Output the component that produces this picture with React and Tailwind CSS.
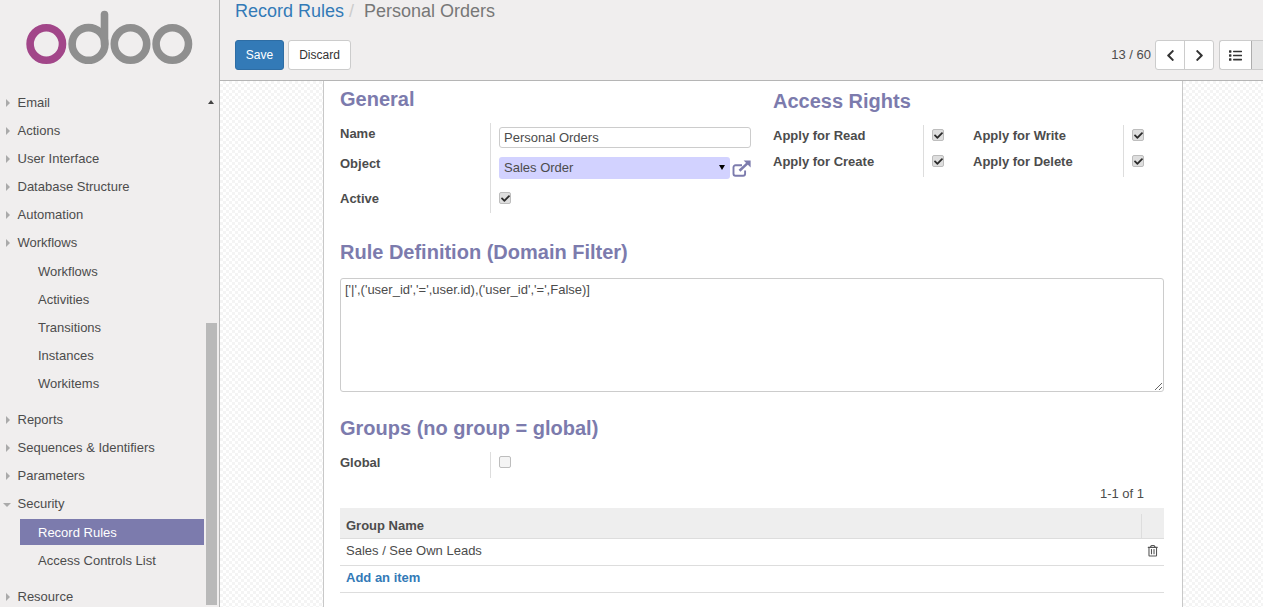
import React from "react";
import { FaCheck, FaChevronLeft, FaChevronRight, FaList, FaRegTrashAlt } from "react-icons/fa";

const Logo = () => (
  <svg width="170" height="56" viewBox="0 0 170 56" className="block">
    <circle cx="20.3" cy="36" r="16.2" fill="none" stroke="#a24689" strokeWidth="7.6" />
    <circle cx="62.5" cy="36" r="16.4" fill="none" stroke="#8f8f8f" strokeWidth="7.6" />
    <line x1="78.5" y1="36" x2="78.5" y2="6.5" stroke="#8f8f8f" strokeWidth="7.6" strokeLinecap="round" />
    <circle cx="104.5" cy="36" r="16.2" fill="none" stroke="#8f8f8f" strokeWidth="7.6" />
    <circle cx="146.3" cy="36" r="16.2" fill="none" stroke="#8f8f8f" strokeWidth="7.6" />
  </svg>
);

const ExternalLink = () => (
  <svg width="19" height="17" viewBox="0 0 19 17" className="ml-[1.5px] mt-[3px] shrink-0">
    <path d="M10 5.3H3.5a2 2 0 0 0-2 2v6.4a2 2 0 0 0 2 2h7.6a2 2 0 0 0 2-2v-3.2" fill="none" stroke="#7c7bad" strokeWidth="1.9" />
    <path d="M7.5 10.8 15.4 3.4" fill="none" stroke="#7c7bad" strokeWidth="2.6" />
    <path d="M11.6 0.4H18.6V7.6Z" fill="#7c7bad" />
  </svg>
);

const Top = ({ label, open }) => (
  <div className="relative flex h-7 items-center pl-[17.5px]">
    {open ? (
      <span className="absolute left-[2.5px] top-[13px] h-0 w-0 border-x-[4px] border-t-[4px] border-x-transparent border-t-[#aaaaaa]" />
    ) : (
      <span className="absolute left-[6px] top-[10px] h-0 w-0 border-y-[4.5px] border-l-[4.5px] border-y-transparent border-l-[#aaaaaa]" />
    )}
    {label}
  </div>
);
const Sub = ({ label, active }) => (
  <div className={`mb-0.5 ml-5 flex h-[26px] w-[184px] items-center pl-[18px] pt-[2px] ${active ? "bg-[#7c7bad] text-white" : ""}`}>{label}</div>
);

const Check = ({ on, className = "" }) => (
  <span className={`flex h-[12px] w-[12px] shrink-0 items-center justify-center rounded-[2px] border border-[#bdbdbd] ${on ? "bg-[#dedede]" : "bg-[#f4f4f4]"} ${className}`}>
    {on && <FaCheck className="text-[9px] text-[#2b2b2b]" />}
  </span>
);

const Heading = ({ children, className = "" }) => (
  <h2 className={`text-[20px] leading-[22px] font-bold text-[#7c7bad] ${className}`}>{children}</h2>
);

const RightPair = ({ a, b }) => (
  <div className="flex w-[200px] shrink-0">
    <div className="w-[150px] font-bold">
      <div className="flex h-[26px] items-center pb-[5px]">{a}</div>
      <div className="flex h-[26px] items-center pb-[5px]">{b}</div>
    </div>
    <div className="border-l border-[#ddd] pl-[8px]">
      <div className="flex h-[26px] items-center pb-[6px]"><Check on /></div>
      <div className="flex h-[26px] items-center pb-[6px]"><Check on /></div>
    </div>
  </div>
);

export default function App() {
  return (
    <div className="flex h-[607px] w-[1263px] overflow-hidden bg-[#f0eeee] text-[13px] text-[#4c4c4c] font-['Liberation_Sans',Arial,sans-serif]">
      <aside className="relative w-[220px] shrink-0 overflow-hidden border-r border-[#b5b5b5]">
        <div className="flex h-[89px] items-start pt-[8px] pl-[26px]"><Logo /></div>
        <Top label="Email" />
        <Top label="Actions" />
        <Top label="User Interface" />
        <Top label="Database Structure" />
        <Top label="Automation" />
        <Top label="Workflows" />
        <div className="mt-[1px] mb-[10px]">
          <Sub label="Workflows" />
          <Sub label="Activities" />
          <Sub label="Transitions" />
          <Sub label="Instances" />
          <Sub label="Workitems" />
        </div>
        <Top label="Reports" />
        <Top label="Sequences & Identifiers" />
        <Top label="Parameters" />
        <Top label="Security" open />
        <div className="mt-[1px] mb-[10px]">
          <Sub label="Record Rules" active />
          <Sub label="Access Controls List" />
        </div>
        <Top label="Resource" />
        <span className="absolute left-[208px] top-[100px] h-0 w-0 border-x-[3.5px] border-b-[4px] border-x-transparent border-b-[#444]" />
        <div className="absolute left-[206px] top-[323px] h-[282px] w-[11px] bg-[#b9b9b9]" />
      </aside>

      <main className="flex min-w-0 flex-1 flex-col">
        <header className="h-[81px] shrink-0 border-b border-[#b5b5b5] px-[15px]">
          <div className="flex h-[22px] items-center text-[18px] leading-[22px]">
            <span className="text-[#337ab7]">Record Rules</span>
            <span className="ml-[5px] text-[#ccc]">/</span>
            <span className="ml-[10px] text-[#777]">Personal Orders</span>
          </div>
          <div className="mt-[18px] flex items-center">
            <button className="flex h-[30px] w-[49px] items-center justify-center rounded-[3px] border border-[#2e6da4] bg-[#337ab7] text-[12px] text-white">Save</button>
            <button className="ml-1 flex h-[30px] w-[63px] items-center justify-center rounded-[3px] border border-[#ccc] bg-white text-[12px] text-[#333]">Discard</button>
            <span className="ml-auto mr-[4px] text-[#4c4c4c]">13 / 60</span>
            <div className="flex h-[30px] rounded-[3px] border border-[#ccc] bg-white text-[13px] text-[#333]">
              <span className="flex w-[29px] items-center justify-center border-r border-[#ccc]"><FaChevronLeft /></span>
              <span className="flex w-[28px] items-center justify-center"><FaChevronRight /></span>
            </div>
            <div className="-mr-[15px] ml-[5px] flex h-[30px] rounded-l-[3px] border border-r-0 border-[#ccc] bg-white text-[13px] text-[#333]">
              <span className="flex w-[32px] items-center justify-center border-r border-[#adadad]"><FaList /></span>
              <span className="w-[11px] bg-[#e6e6e6]" />
            </div>
          </div>
        </header>

        <div className="flex-1 overflow-hidden bg-[conic-gradient(#f4f4f4_25%,#ffffff_0_50%,#f4f4f4_0_75%,#ffffff_0)] bg-[length:6px_6px] pl-[103px]">
          <section className="h-full w-[860px] border-x border-[#c8c8c8] bg-white pl-[16px] pr-[18px]">
            <div className="flex">
              <div className="w-[433px] shrink-0">
                <Heading className="mt-[7px]">General</Heading>
                <div className="mt-[13px] flex">
                  <div className="w-[150px] font-bold">
                    <div className="flex h-[30px] items-start pt-[1px]">Name</div>
                    <div className="flex h-[35px] items-start pt-[1px]">Object</div>
                    <div className="flex h-[25px] items-start pt-[1px]">Active</div>
                  </div>
                  <div className="w-[261px] border-l border-[#ddd] pl-[8px] pt-[4px]">
                    <input readOnly value="Personal Orders" className="block h-[21px] w-[252px] rounded-[3px] border border-[#ccc] bg-white px-[4px] text-[13px] outline-none" />
                    <div className="mt-[9px] flex h-[22px] items-start">
                      <div className="relative w-[231px]">
                        <select className="block h-[22px] w-full appearance-none rounded-[3px] bg-[#d2d2ff] px-[5px] text-[13px] outline-none">
                          <option>Sales Order</option>
                        </select>
                        <span className="absolute right-[5px] top-[8px] h-0 w-0 border-x-[3px] border-t-[5px] border-x-transparent border-t-black" />
                      </div>
                      <ExternalLink />
                    </div>
                    <Check on className="mt-[13px]" />
                  </div>
                </div>
              </div>
              <div className="shrink-0 pt-[9px]">
                <Heading>Access Rights</Heading>
                <div className="mt-[13px] flex">
                  <RightPair a="Apply for Read" b="Apply for Create" />
                  <RightPair a="Apply for Write" b="Apply for Delete" />
                </div>
              </div>
            </div>

            <Heading className="mt-[28px]">Rule Definition (Domain Filter)</Heading>
            <textarea
              readOnly
              value="['|',('user_id','=',user.id),('user_id','=',False)]"
              className="mt-[15px] block h-[114px] w-[824px] rounded-[3px] border border-[#ccc] bg-white px-[4px] py-[1px] text-[13px] outline-none"
            />

            <Heading className="mt-[25px]">Groups (no group = global)</Heading>
            <div className="mt-[13px] flex h-[26px]">
              <div className="flex h-full w-[150px] items-center pb-[5px] font-bold">Global</div>
              <div className="flex h-full items-start border-l border-[#ddd] pl-[8px] pt-[4px]"><Check /></div>
            </div>
            <div className="mt-[7px] flex h-[18px] w-[824px] items-center justify-end pr-[20px]">1-1 of 1</div>
            <table className="mt-[5px] w-[824px] border-separate border-spacing-0">
              <tbody>
                <tr className="bg-[#eeeeee] font-bold">
                  <td className="h-[31px] border-b border-[#ddd] px-[6px] pt-[5px] text-left">Group Name</td>
                  <td className="h-[31px] w-[23px] border-b border-[#ddd] pt-[6px] align-top"><div className="h-[24px] border-l border-[#ddd]" /></td>
                </tr>
                <tr>
                  <td className="h-[27px] border-b border-[#ddd] px-[6px] pb-[2px]">Sales / See Own Leads</td>
                  <td className="h-[27px] border-b border-[#ddd] pb-[2px]"><FaRegTrashAlt className="ml-[5.5px] text-[11.5px] text-[#555]" /></td>
                </tr>
                <tr>
                  <td className="h-[27px] border-b border-[#ddd] px-[6px] pb-[2px] font-bold text-[#337ab7]">Add an item</td>
                  <td className="h-[27px] border-b border-[#ddd]" />
                </tr>
              </tbody>
            </table>
          </section>
        </div>
      </main>
    </div>
  );
}
